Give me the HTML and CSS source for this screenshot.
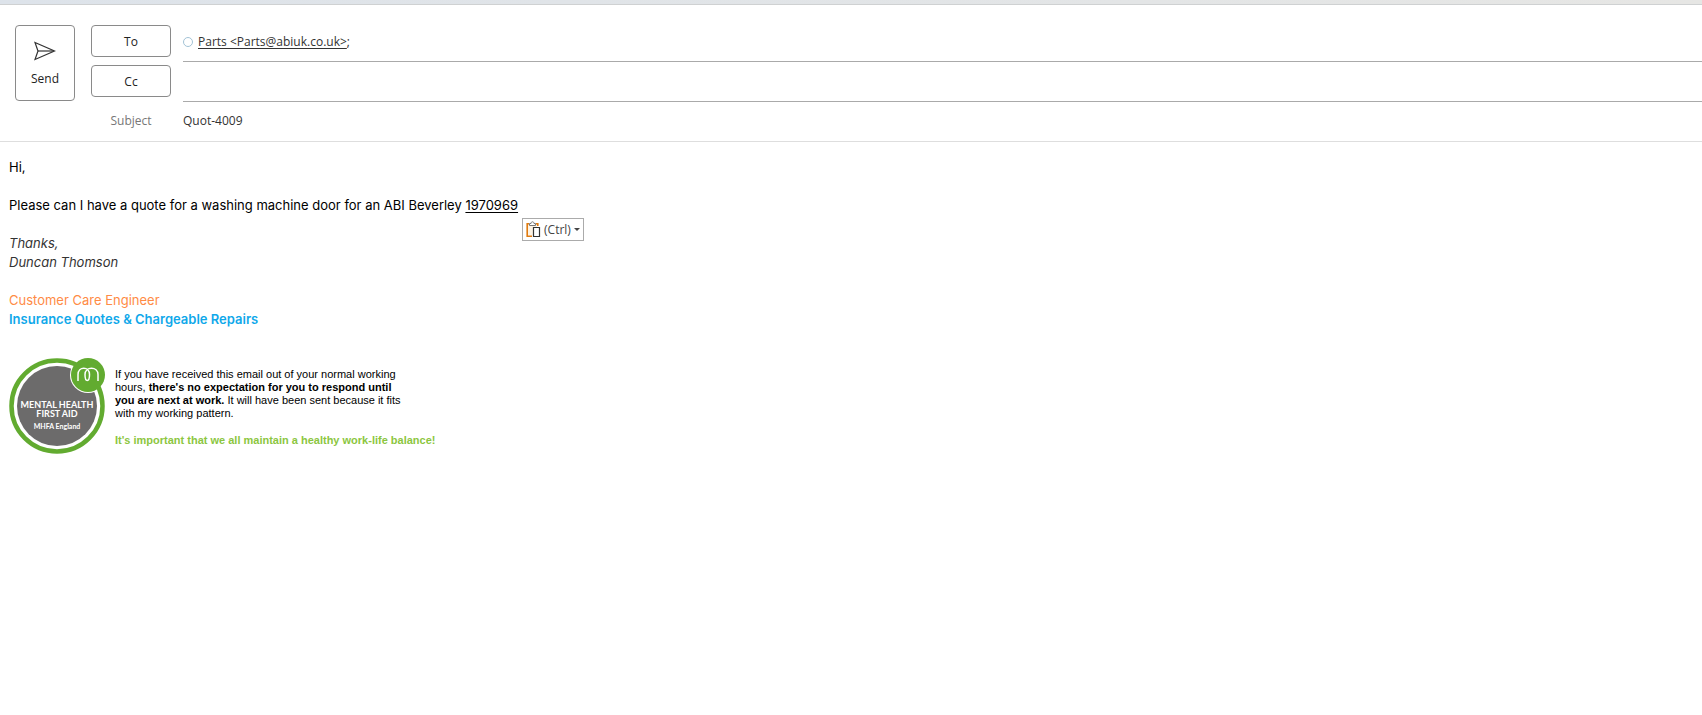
FILE: index.html
```html
<!DOCTYPE html>
<html lang="en">
<head>
    <meta charset="UTF-8">
    <meta name="viewport" content="width=device-width, initial-scale=1.0">
    <title>Quot-4009 - Message</title>
    <link rel="stylesheet" href="styles.css">
</head>
<body>
    <div class="title-strip"></div>
    <form class="mail-header">
        <button type="button" class="send-button">
            <svg width="22" height="20" viewBox="0 0 22 20" fill="none" stroke="#333" stroke-width="1.2" stroke-linejoin="miter">
                <path d="M1 1.5 L20.5 10 L1 18.5 L4 10 Z"/>
                <path d="M4 10 H20"/>
            </svg>
            <span>Send</span>
        </button>
        <div class="fields">
            <div class="field">
                <button type="button" class="field-button">To</button>
                <div class="field-line">
                    <span class="presence"></span>
                    <a class="recipient" href="mailto:Parts@abiuk.co.uk">Parts &lt;Parts@abiuk.co.uk&gt;</a>;
                </div>
            </div>
            <div class="field">
                <button type="button" class="field-button">Cc</button>
                <input type="text" class="field-line" aria-label="Cc">
            </div>
            <div class="field">
                <label class="field-label" for="subject">Subject</label>
                <input type="text" class="field-line subject" id="subject" value="Quot-4009">
            </div>
        </div>
    </form>

    <main class="message">
        <p>Hi,</p>
        <p>Please can I have a quote for a washing machine door for an ABI Beverley <span class="serial"><u>1970969</u>
            <button type="button" class="paste-options">
                <svg width="15" height="17" viewBox="0 0 15 17" fill="none">
                    <path d="M2 3 H11 V14.500 H2 Z" fill="#fdf3e4"/>
                    <path d="M6 15.2 H1.2 V2.8 H3 M10 2.8 H11.8 V5" stroke="#e07b10" stroke-width="1.6"/>
                    <path d="M3.5 4.5 V2.5 H5 C5 0.2 8 0.2 8 2.5 H9.5 V4.5 Z" fill="#fff" stroke="#777"/>
                    <path d="M7.5 6.5 H13.5 V15.5 H7.5 Z" fill="#fff" stroke="#333" stroke-width="1.2"/>
                </svg>
                <span>(Ctrl)</span>
                <span class="caret"></span>
            </button></span></p>
        <p class="sign-off">Thanks,<br>Duncan Thomson</p>
        <p class="signature">
            <span class="role">Customer Care Engineer</span><br>
            <strong class="team">Insurance Quotes &amp; Chargeable Repairs</strong>
        </p>

        <div class="banner">
            <svg class="badge" width="96" height="96" viewBox="0 0 96 96" role="img" aria-label="Mental Health First Aid, MHFA England">
                <circle cx="48" cy="48" r="40" fill="#6c6b6b"/>
                <circle cx="79" cy="17" r="18" fill="#fff"/>
                <circle cx="48" cy="48" r="45.5" fill="none" stroke="#62ab30" stroke-width="4.5"/>
                <circle cx="79" cy="17" r="17" fill="#62ab30"/>
                <path d="M69 23 V16.500 C69 8 80.500 8 80.500 16.500 C80.500 24.500 76 24.500 76 16.500 C76 8 89 8 89 16.500 V23" fill="none" stroke="#fff" stroke-width="1.5"/>
                <g class="badge-text">
                    <text x="48" y="50">MENTAL HEALTH</text>
                    <text x="48" y="59">FIRST AID</text>
                    <text class="badge-small" x="48" y="71">MHFA England</text>
                </g>
            </svg>
            <div class="notice">
                <p>If you have received this email out of your normal working<br>
                hours, <b>there's no expectation for you to respond until<br>
                you are next at work.</b> It will have been sent because it fits<br>
                with my working pattern.</p>
                <p class="balance">It's important that we all maintain a healthy work-life balance!</p>
            </div>
        </div>
    </main>
</body>
</html>
```
FILE: styles.css
```css
* {
    margin: 0;
    padding: 0;
    box-sizing: border-box;
}

body {
    background: #fff;
    color: #000;
    font-family: Inter, sans-serif;
    font-size: 13px;
    line-height: 19px;
}

.title-strip {
    height: 5px;
    background: linear-gradient(to right, #dde3ea, #e6e6e4);
    border-bottom: 1px solid #cfd1d2;
}

.mail-header {
    display: flex;
    align-items: flex-start;
    gap: 16px;
    padding: 17px 0 0 15px;
    border-bottom: 1px solid #dedede;
    font-family: "Open Sans", sans-serif;
    font-size: 12px;
    color: #333;
}

.send-button,
.field-button {
    background: #fff;
    border: 1px solid #8a8a8a;
    border-radius: 4px;
    font: inherit;
    color: #222;
    cursor: pointer;
}

.send-button {
    display: flex;
    flex-direction: column;
    align-items: center;
    justify-content: center;
    gap: 8px;
    width: 60px;
    height: 76px;
    margin-top: 3px;
    padding-top: 2px;
}

.fields {
    flex: 1;
}

.field {
    display: flex;
    align-items: flex-start;
    gap: 12px;
    height: 40px;
}

.field:last-child {
    height: 39px;
}

.field-button {
    width: 80px;
    height: 32px;
    margin-top: 3px;
}

.field-label {
    width: 80px;
    line-height: 38px;
    text-align: center;
    color: #777;
}

.field-line {
    flex: 1;
    display: flex;
    align-items: center;
    height: 40px;
    background: transparent;
    border: none;
    border-bottom: 1px solid #aaa;
    outline: none;
    font: inherit;
    color: #333;
}

.field-line.subject {
    height: 37px;
    border-bottom: none;
}

.presence {
    width: 10px;
    height: 10px;
    margin-right: 5px;
    border: 1px solid #a3c3d6;
    border-radius: 50%;
}

.recipient {
    color: #333;
    text-underline-offset: 2px;
}

.message {
    padding: 16px 9px;
}

.message > p {
    margin-bottom: 19px;
}

.serial {
    position: relative;
}

.serial u {
    text-underline-offset: 2px;
}

/* floats just below the pasted text */
.paste-options {
    position: absolute;
    top: 21px;
    left: 100%;
    display: flex;
    align-items: center;
    gap: 3px;
    height: 23px;
    margin-left: 4px;
    padding: 0 3px;
    background: #fff;
    border: 1px solid #ababab;
    font-family: "Open Sans", sans-serif;
    font-size: 12px;
    color: #444;
}

.caret {
    border: 3px solid transparent;
    border-top-color: #444;
    border-bottom: none;
}

.sign-off {
    font-style: italic;
    color: #333;
}

.role {
    color: #ff8b45;
}

.team {
    font-weight: 600;
    color: #0fa8ea;
}

.banner {
    display: flex;
    gap: 10px;
    padding-top: 10px;
}

.badge {
    flex: none;
}

.badge-text {
    fill: #fff;
    font-family: Lato, sans-serif;
    font-size: 9px;
    font-weight: bold;
    text-anchor: middle;
}

.badge-small {
    font-size: 7px;
}

.notice {
    padding-top: 10px;
    font-family: "Liberation Sans", Arial, sans-serif;
    font-size: 11px;
    line-height: 13px;
}

.balance {
    margin-top: 14px;
    font-weight: bold;
    color: #8cc63f;
}
```
